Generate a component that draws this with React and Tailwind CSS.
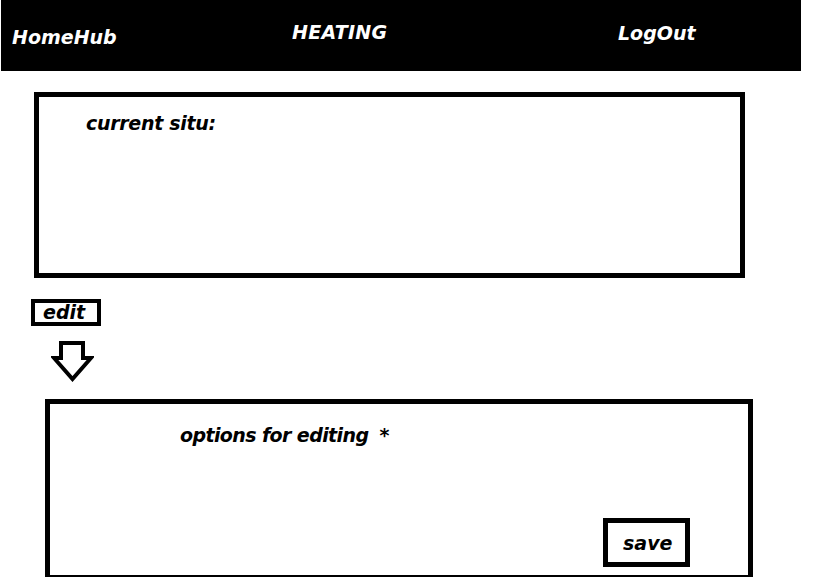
export default function App() {
  const font = { fontFamily: '"DejaVu Sans", Verdana, sans-serif' };
  return (
    <div className="w-[818px] h-[577px] overflow-hidden bg-white font-bold italic text-[19px] leading-none" style={font}>
      <div className="ml-[1px] w-[800px] h-[71px] bg-black text-white flex items-start">
        <div className="w-[291px] pl-[11px] pt-[28px]">HomeHub</div>
        <div className="w-[326px] pt-[23px] tracking-[0.3px]">HEATING</div>
        <div className="pt-[24px]">LogOut</div>
      </div>
      <div className="ml-[34px] mt-[21px] w-[711px] h-[186px] border-[5px] border-black pt-[17px] pl-[47px] text-black tracking-[-0.3px]">
        current situ:
      </div>
      <div className="ml-[31px] mt-[21px] w-[70px] h-[27px] border-[4px] border-black pl-[8px] text-black">
        edit
      </div>
      <div className="ml-[51px] mt-[15px] w-[43px] h-[41px]">
        <svg width="43" height="41" viewBox="0 0 43 41">
          <path d="M10 2 H32 V17 H40 L21.5 38 L3 17 H10 Z" fill="white" stroke="black" strokeWidth="4" strokeLinejoin="miter" />
        </svg>
      </div>
      <div className="ml-[45px] mt-[17px] w-[708px] h-[178px] border-[5px] border-b-[2px] border-black flex flex-col text-black">
        <div className="pl-[130px] pt-[22px] tracking-[-0.6px]">
          options for editing <span className="ml-[5px]">*</span>
        </div>
        <div className="self-end mr-[58px] mt-[73px] w-[87px] h-[49px] border-[5px] border-black pl-[15px] pt-[11px]">
          save
        </div>
      </div>
    </div>
  );
}
